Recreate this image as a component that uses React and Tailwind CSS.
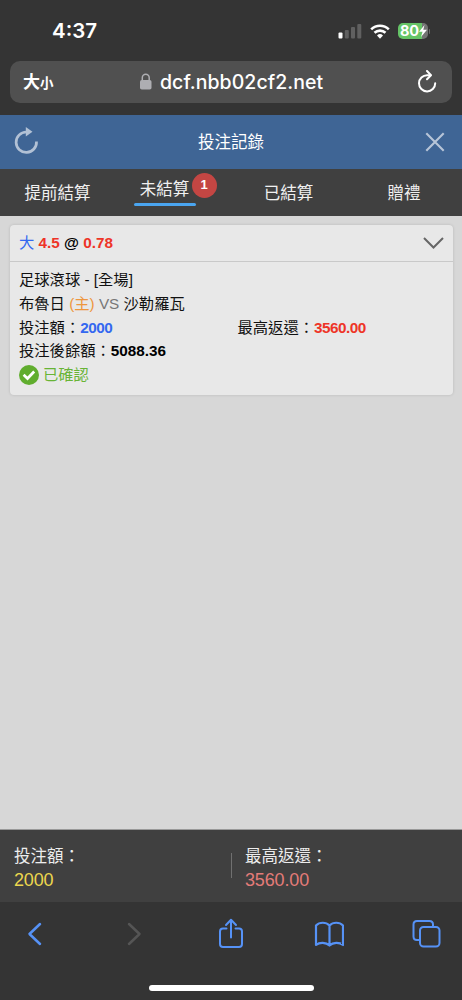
const FONT = "font-['Liberation_Sans','Noto_Sans_CJK_TC',sans-serif]";

function StatusBar() {
  return (
    <div className="h-[60px] shrink-0 flex items-start justify-between pl-[52px] pr-[34px] pt-[20px] text-white font-['Inter',sans-serif]">
      <span className="text-[20.500px] leading-[22px] font-semibold">4:37</span>
      <div className="flex items-center h-[22px]">
        <svg width="24" height="16" viewBox="0 0 24 16" className="mr-[8px]">
          <rect x="0.5" y="9.5" width="4" height="6" rx="1" fill="#fff" />
          <rect x="6.8" y="7" width="4" height="8.5" rx="1" fill="#606060" />
          <rect x="13" y="4" width="4" height="11.5" rx="1" fill="#606060" />
          <rect x="19.3" y="1" width="4" height="14.5" rx="1" fill="#606060" />
        </svg>
        <svg width="20" height="15" viewBox="0 0 20 15" className="mr-[8px]" fill="none" stroke="#fff" strokeWidth="2.6">
          <path d="M1.2 5.4A12.6 12.6 0 0 1 18.8 5.4" />
          <path d="M4.5 8.8A8 8 0 0 1 15.500 8.8" />
          <path d="M7 11.500A4.300 4.300 0 0 1 13 11.500L10 14.700Z" fill="#fff" stroke="none" />
        </svg>
        <div className="relative w-[30px] h-[16px] rounded-[5px] bg-[linear-gradient(90deg,#65c466_80%,#737373_80%)] flex items-center pl-[2px]">
          <span className="text-[14.500px] leading-[16px] font-bold tracking-[-0.300px]">80</span>
          <svg width="8" height="12" viewBox="0 0 8 12" className="absolute left-[21px] top-[2px]">
            <path d="M5.500 0L0 6.800H3.500L2 12L8 4.800H4.300Z" fill="#fff" />
          </svg>
          <span className="absolute -right-[2px] top-[6px] w-[1.500px] h-[5px] rounded-r bg-[#6a6a6a]" />
        </div>
      </div>
    </div>
  );
}

function AddressBar() {
  return (
    <div className="mx-[10px] mt-[0.500px] h-[42.500px] shrink-0 rounded-[10px] bg-[#505050] flex items-center px-[13px] text-white">
      <div className="w-[116px] font-['Noto_Sans_CJK_TC',sans-serif] font-bold leading-[20px]">
        <span className="text-[17px]">大</span><span className="text-[13.500px]">小</span>
      </div>
      <svg width="14" height="17" viewBox="0 0 14 17" className="shrink-0">
        <rect x="1" y="7" width="11.500" height="9.500" rx="1.800" fill="#aeaeb2" />
        <path d="M3.300 7.500V4.800a3.450 3.450 0 0 1 6.900 0V7.500" fill="none" stroke="#aeaeb2" strokeWidth="1.500" />
      </svg>
      <span className="ml-[7px] font-['Inter',sans-serif] font-medium text-[19.500px] leading-[24px] tracking-[0.050px] relative top-[0.500px]">dcf.nbb02cf2.net</span>
      <svg width="20" height="24" viewBox="0 0 20 24" className="ml-auto mr-[2px]" fill="none" stroke="#fff" strokeWidth="2" strokeLinecap="round" strokeLinejoin="round">
        <path d="M13.200 5.200H10.200A8.100 8.100 0 1 0 18.200 13.300" />
        <path d="M10 1L14 5.200L10 9.200" />
      </svg>
    </div>
  );
}

function PageHeader() {
  return (
    <div className="mt-[12px] h-[54px] shrink-0 bg-[#3f6595] flex items-center justify-between pl-[14px] pr-[17px]">
      <svg width="25" height="28" viewBox="0 0 25 28" className="mb-[2px]">
        <path d="M12.300 5A10.200 10.200 0 1 0 22.500 14.500" fill="none" stroke="#b2c1d5" strokeWidth="2.700" />
        <path d="M11.800 0L18.500 4.700L11.800 9.500Z" fill="#b2c1d5" />
      </svg>
      <h1 className="text-[16.500px] leading-[24px] text-white mr-[2px]">投注記錄</h1>
      <svg width="20" height="20" viewBox="0 0 20 20" fill="none" stroke="#b7c5d8" strokeWidth="2.100">
        <path d="M1.300 1.300L18.700 18.700M18.700 1.300L1.300 18.700" />
      </svg>
    </div>
  );
}

function Tabs() {
  return (
    <div className="h-[47px] shrink-0 bg-[#404040] flex text-[16.500px] leading-[24px] text-[#f0f0f0]">
      <div className="w-[115px] pt-[12px] text-center">提前結算</div>
      <div className="w-[116px] pt-[8px] pr-[16px] flex flex-col items-center">
        <div className="relative w-[62px] text-center h-[25.500px] pr-[1px]">
          未結算
          <span className="absolute left-[57.500px] -top-[4.500px] w-[25px] h-[25px] rounded-full bg-[#c44643] flex items-center justify-center text-[13px] font-bold text-white">1</span>
        </div>
        <div className="w-[62px] h-[3.500px] shrink-0 rounded-full bg-[#4aa5f0]" />
      </div>
      <div className="w-[115px] pt-[12px] text-center">已結算</div>
      <div className="flex-1 pt-[12px] text-center">贈禮</div>
    </div>
  );
}

function BetCard() {
  return (
    <div className="mx-[9.500px] mt-[9px] h-[170px] rounded-[4px] bg-[#e8e8e8] shadow-[0_0_3px_rgba(0,0,0,0.150)] text-[15.300px] text-[#111]">
      <div className="h-[37px] border-b border-[#c9c9c9] flex items-center justify-between pl-[9.500px] pr-[9px]">
        <div className="font-bold text-[15.300px] leading-[24px] text-[#ee3427]">
          <span className="font-normal text-[#3468f0]">大</span> 4.5 <span className="text-black">@</span> 0.78
        </div>
        <svg width="21" height="12" viewBox="0 0 21 12" fill="none" stroke="#666" strokeWidth="2">
          <path d="M1 1L10.500 10.500L20 1" />
        </svg>
      </div>
      <div className="px-[9.500px] pt-[6px] leading-[23.800px]">
        <div>足球滾球 - [全場]</div>
        <div>布魯日 <span className="text-[#ee963e]">(主)</span> <span className="text-[#777]">VS</span> 沙勒羅瓦</div>
        <div className="flex">
          <div className="w-[218.500px]">投注額：<b className="text-[#3468f0] tracking-[-0.500px]">2000</b></div>
          <div>最高返還：<b className="text-[#ee3427] tracking-[-0.500px]">3560.00</b></div>
        </div>
        <div>投注後餘額：<b className="text-black">5088.36</b></div>
        <div className="flex items-center gap-[4px] text-[#68b436]">
          <svg width="20" height="20" viewBox="0 0 20 20">
            <circle cx="10" cy="10" r="10" fill="#60ad2e" />
            <path d="M4.600 9.800L8.500 13.500L15.200 6.500" fill="none" stroke="#fff" strokeWidth="2.700" />
          </svg>
          已確認
        </div>
      </div>
    </div>
  );
}

function Totals() {
  return (
    <div className="h-[73px] shrink-0 bg-[#404040] border-t border-[#999] flex items-start pt-[14px] text-[16.500px] leading-[24px] text-[#ededed]">
      <div className="w-[231px] pl-[14px]">
        <div>投注額：</div>
        <div className="text-[18px] tracking-[-0.150px] text-[#ecd64e]">2000</div>
      </div>
      <div className="w-px h-[25px] mt-[9px] bg-[#707070]" />
      <div className="pl-[13px]">
        <div>最高返還：</div>
        <div className="text-[18px] tracking-[-0.150px] text-[#e37b78]">3560.00</div>
      </div>
    </div>
  );
}

function BrowserToolbar() {
  return (
    <div className="h-[98px] shrink-0 flex flex-col items-center justify-between pt-[15px] pb-[9px]">
      <div className="w-full h-[34px] px-[20px] flex items-center justify-between text-[#5692f6]">
        <svg width="30" height="26" viewBox="-7 0 30 26" fill="none" stroke="currentColor" strokeWidth="2.500" strokeLinecap="round" strokeLinejoin="round">
          <path d="M13 3L2.500 13L13 23" />
        </svg>
        <svg width="30" height="26" viewBox="-7 0 30 26" fill="none" stroke="#555" strokeWidth="2.500" strokeLinecap="round" strokeLinejoin="round">
          <path d="M4 3L14.500 13L4 23" />
        </svg>
        <svg width="30" height="32" viewBox="-2.500 0 30 32" fill="none" stroke="currentColor" strokeWidth="2" strokeLinecap="round" strokeLinejoin="round">
          <path d="M8 10.500H4.500Q1.500 10.500 1.500 13.500V26Q1.500 29 4.500 29H20.500Q23.500 29 23.500 26V13.500Q23.500 10.500 20.500 10.500H17" />
          <path d="M12.500 19.500V2M7.500 7L12.500 1.800L17.500 7" />
        </svg>
        <svg width="30" height="26" viewBox="0 0 30 26" fill="none" stroke="currentColor" strokeWidth="2.200" strokeLinecap="round" strokeLinejoin="round">
          <path d="M15.500 4.500C12 0.800 5.500 0.800 2 4.500V24C5.500 21 12 21 15.500 24.500C19 21 25.500 21 29 24V4.500C25.500 0.800 19 0.800 15.500 4.500ZV24.300" />
        </svg>
        <svg width="30" height="30" viewBox="0 0 30 30" fill="none" stroke="currentColor" strokeWidth="2" strokeLinejoin="round">
          <path d="M8 21H5Q1.500 21 1.500 17.500V5.500Q1.500 2 5 2H17.500Q21 2 21 5.500V8" />
          <rect x="8" y="8" width="19.500" height="19.500" rx="3.500" />
        </svg>
      </div>
      <div className="w-[165px] h-[6px] rounded-full bg-white" />
    </div>
  );
}

export default function App() {
  return (
    <div className={`w-[462px] h-[1000px] flex flex-col overflow-hidden bg-[#343434] ${FONT}`}>
      <StatusBar />
      <AddressBar />
      <PageHeader />
      <Tabs />
      <main className="flex-1 min-h-0 bg-[#d7d7d7] flow-root">
        <BetCard />
      </main>
      <Totals />
      <BrowserToolbar />
    </div>
  );
}
